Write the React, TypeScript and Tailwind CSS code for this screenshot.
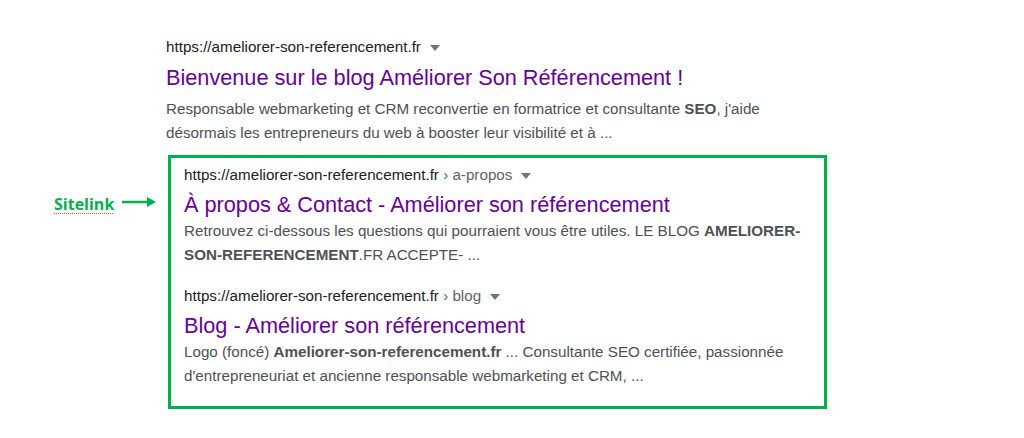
const Caret = () => (
  <svg width="10" height="6" viewBox="0 0 10 6" className="ml-[9px] mt-[1px]">
    <path d="M0 0h10L5 6z" fill="#70757a" />
  </svg>
);

function Result({
  path,
  title,
  titleGap,
  snippetGap,
  children,
}: {
  path?: string;
  title: string;
  titleGap: string;
  snippetGap: string;
  children: React.ReactNode;
}) {
  return (
    <div>
      <div className="flex items-center h-[20px] text-[15.2px] text-[#202124]">
        <span>https://ameliorer-son-referencement.fr</span>
        {path && <span className="text-[#5f6368]">&nbsp;› {path}</span>}
        <Caret />
      </div>
      <div className={`${titleGap} text-[21.7px] leading-[28px] text-[#660099]`}>{title}</div>
      <p className={`${snippetGap} text-[15.2px] leading-[24px] text-[#4d5156]`}>{children}</p>
    </div>
  );
}

export default function App() {
  return (
    <div
      className="w-[1024px] h-[438px] bg-white relative"
      style={{ fontFamily: '"Liberation Sans", Arial, sans-serif' }}
    >
      <div className="pl-[166px] pt-[37px]">
        <Result
          titleGap="mt-[7px]"
          snippetGap="mt-[5px]"
          title="Bienvenue sur le blog Améliorer Son Référencement !"
        >
          Responsable webmarketing et CRM reconvertie en formatrice et consultante <b>SEO</b>, j'aide
          <br />
          désormais les entrepreneurs du web à booster leur visibilité et à ...
        </Result>
      </div>

      <div className="flex items-start mt-[10px]">
        <div className="w-[168px] flex items-center pl-[54px] pt-[37px]">
          <span
            className="text-[16px] font-bold text-[#00b050] underline decoration-dotted decoration-[#ff4d4d] decoration-1 underline-offset-[3px]"
            style={{ fontFamily: '"Open Sans", "Liberation Sans", sans-serif' }}
          >
            Sitelink
          </span>
          <svg width="34" height="10" viewBox="0 0 34 10" className="ml-[8px] -mt-[4px]">
            <path d="M0 5h26" stroke="#00b050" strokeWidth="2.5" />
            <path d="M25 0l9 5-9 5z" fill="#00b050" />
          </svg>
        </div>
        <div className="w-[659px] h-[254px] border-[3px] border-[#00b050] pl-[13px] pt-[7px] flex flex-col gap-[19px]">
          <Result
            titleGap="mt-[6px]"
            snippetGap="mt-[0px]"
            path="a-propos"
            title="À propos & Contact - Améliorer son référencement"
          >
            Retrouvez ci-dessous les questions qui pourraient vous être utiles. LE BLOG <b>AMELIORER-</b>
            <br />
            <b>SON-REFERENCEMENT</b>.FR ACCEPTE- ...
          </Result>
          <Result
            titleGap="mt-[6px]"
            snippetGap="mt-[0px]"
            path="blog"
            title="Blog - Améliorer son référencement"
          >
            Logo (foncé) <b>Ameliorer-son-referencement.fr</b> ... Consultante SEO certifiée, passionnée
            <br />
            d'entrepreneuriat et ancienne responsable webmarketing et CRM, ...
          </Result>
        </div>
      </div>
    </div>
  );
}
